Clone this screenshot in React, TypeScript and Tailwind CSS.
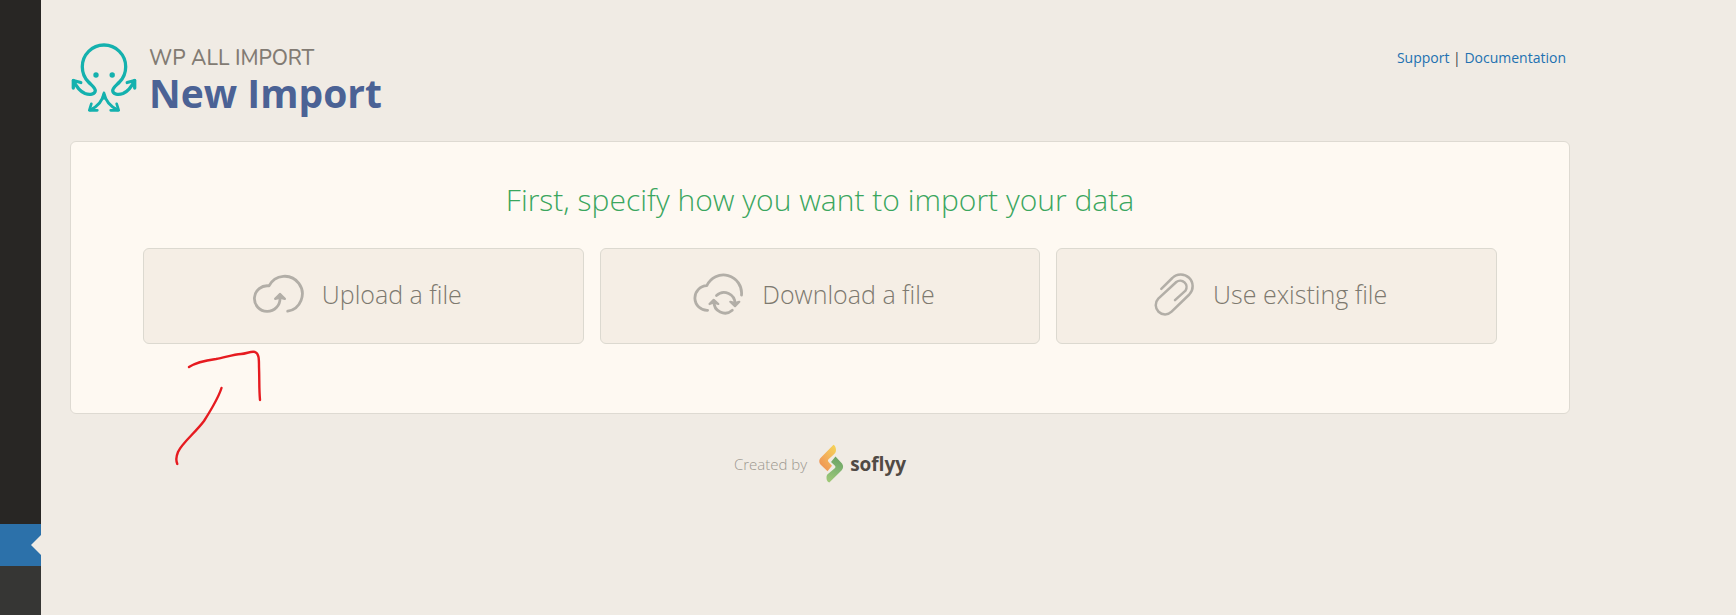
import React from 'react';

const OctopusLogo: React.FC = () => (
  <svg className="mt-0.5 w-[68px] h-[72px] shrink-0" viewBox="0 0 68 72" fill="none" stroke="#14b1ae" strokeWidth="3.3" strokeLinecap="round" strokeLinejoin="round">
    <path d="M3.500 38.700C6.500 45 10.500 49.500 15 51.500C19.500 53 25.300 52.500 25.300 48.500C25.300 46 22 43.700 18.500 40C14.500 36 12.300 31 12.300 24.700A21.700 21.700 0 0 1 55.700 24.700C55.700 31 53.500 36 49.500 40C46 43.700 42.700 46 42.700 48.500C42.700 52.500 48.500 53 53 51.500C57.500 49.500 61.500 45 64.500 38.700" />
    <path d="M3.300 46V38.500L10.800 40.500M64.700 46V38.500L57.200 40.500" />
    <path d="M34 51.500C32.500 58.500 28.500 64 20.500 67.800M34 51.500C35.500 58.500 39.500 64 47.500 67.800" strokeWidth="3" />
    <path d="M21.300 61.800L19.300 68.300H27.300M46.700 61.800L48.700 68.300H40.700" strokeWidth="2.700" />
    <path d="M34 50L36 57H32Z" fill="#14b1ae" strokeWidth="1" />
    <circle cx="26" cy="33" r="2.7" fill="#14b1ae" stroke="none" />
    <circle cx="42.200" cy="33" r="2.7" fill="#14b1ae" stroke="none" />
  </svg>
);

const UploadIcon: React.FC = () => (
  <svg className="w-[51px] h-[42px]" viewBox="0 0 51 42" fill="none" stroke="#b2aea7" strokeWidth="2.8" strokeLinecap="round" strokeLinejoin="round">
    <path d="M34.700 37.200A17.600 17.600 0 1 0 16 11.900A12.800 12.800 0 1 0 27 24V21" />
    <path d="M22.200 24.800L27 20L31.800 24.800L27 23.500Z" fill="#b2aea7" strokeWidth="2.400" />
  </svg>
);

const DownloadIcon: React.FC = () => (
  <svg className="w-[51px] h-[44px]" viewBox="0 0 51 44" fill="none" stroke="#b2aea7" strokeWidth="2.8" strokeLinecap="round" strokeLinejoin="round">
    <path d="M14.600 37.300A12.300 12.300 0 0 1 13.800 12.700A18.200 18.200 0 0 1 48.500 22" />
    <path d="M23.500 22.500A11 11 0 0 1 42 31M39.300 37.300A11 11 0 0 1 21 28.500" />
    <path d="M37.300 28.800L42 30L46.300 28.800L42 33.200ZM16.500 31L20.700 26.800L25.300 31L20.700 29.500Z" fill="#b2aea7" strokeWidth="2.200" />
  </svg>
);

const ClipIcon: React.FC = () => (
  <svg className="w-[41px] h-[44px]" viewBox="0 0 41 44" fill="none" stroke="#b2aea7" strokeWidth="2.5" strokeLinecap="round" strokeLinejoin="round">
    <path d="M7.300 15.800L18.300 5A11.800 11.800 0 0 1 35.300 21.500L17.600 38.700A9.300 9.300 0 0 1 4.300 25.700L22.300 9A6.400 6.400 0 0 1 31.500 17.600L21 27.200" />
  </svg>
);

const SoflyyMark: React.FC = () => (
  <svg className="w-[25px] h-[40px]" viewBox="0 0 25 40">
    <defs>
      <linearGradient id="sun" x1="1" y1="0" x2="0.200" y2="1">
        <stop offset="0" stopColor="#f5d657" />
        <stop offset="0.500" stopColor="#f4b45a" />
        <stop offset="1" stopColor="#ee9055" />
      </linearGradient>
      <linearGradient id="leaf" x1="0.600" y1="0" x2="0.400" y2="1">
        <stop offset="0" stopColor="#6ba263" />
        <stop offset="0.550" stopColor="#85b873" />
        <stop offset="1" stopColor="#9fc877" />
      </linearGradient>
    </defs>
    <path fill="url(#sun)" d="M14.500 0.700C16 1.500 17 3.500 17 6C17 8 16 9.500 14.500 10.800L9.500 15.300C8.500 16.500 9 17.500 10 18.500L13 21.700L8.500 27.300L1.500 20.500C-0.300 18.500 0 15.500 1.500 14Z" />
    <path fill="url(#leaf)" d="M16.500 12.500L23 19.500C24.600 21.500 24.500 24.500 22.500 26.500L10.300 38.500C8 37.500 7.500 36 7.500 33.500C7.500 31.800 8 30.600 9.500 29.500L15.500 24.500C16.800 23.300 16.700 22.500 15.700 21.500L12 18Z" />
  </svg>
);

const ScribbleArrow: React.FC = () => (
  <svg className="pointer-events-none absolute top-[349px] left-[173px] w-[92px] h-[118px]" viewBox="0 0 92 118" fill="none" stroke="#e61b20" strokeWidth="2.4" strokeLinecap="round" strokeLinejoin="round">
    <path d="M16 18C22 14 32 11.500 43 10C52 8.500 60 5.500 68 5C74 4.500 78 2 82 3C86 4.500 86 10 86 18C86.500 30 86 40 87 51" />
    <path d="M48.500 39C45 50 38 61 31 72C22 84 9 94 5 103C3 108 3 112 4.300 115" />
  </svg>
);

const sources = [
  { label: 'Upload a file', Icon: UploadIcon },
  { label: 'Download a file', Icon: DownloadIcon },
  { label: 'Use existing file', Icon: ClipIcon },
];

const Sidebar: React.FC = () => (
  <aside className="flex w-[41px] shrink-0 flex-col bg-[#363634]">
    <div className="h-[524px] bg-[#282624]" />
    <div className="flex h-[42px] items-center justify-end bg-[#2c71aa]">
      <svg className="w-[10px] h-5" viewBox="0 0 10 20" fill="#f0ebe4">
        <path d="M10 0V20L0 10Z" />
      </svg>
    </div>
  </aside>
);

const App: React.FC = () => {
  return (
    <div className="relative flex min-h-screen bg-[#f0ebe4] font-['Open_Sans',sans-serif]">
      <Sidebar />

      <main className="flex-1 pl-[29px] pr-[166px] pt-10">
        <header className="flex h-[101px] items-start justify-between">
          <div className="flex gap-[11px]">
            <OctopusLogo />
            <div className="pt-1">
              <p className="font-['Nunito','Lato',sans-serif] text-[21px] leading-7 font-medium text-[#827b73]">WP ALL IMPORT</p>
              <h1 className="text-[39px] leading-[42px] font-bold text-[#4b6295]">New Import</h1>
            </div>
          </div>
          <nav className="pt-1.5 pr-1 text-[14px] leading-6 text-[#3c434a]">
            <a href="#support" className="text-[#2271b1]">Support</a>
            {' | '}
            <a href="#documentation" className="text-[#2271b1]">Documentation</a>
          </nav>
        </header>

        <section className="h-[273px] rounded-md border border-[#dedad2] bg-[#fef9f2] px-[72px] pt-[38px]">
          <h2 className="text-center text-[30px] leading-10 font-light text-[#3aa65e]">First, specify how you want to import your data</h2>
          <div className="mt-7 grid grid-cols-3 gap-4">
            {sources.map(({ label, Icon }) => (
              <button
                key={label}
                type="button"
                className="flex h-24 items-center justify-center gap-[18px] rounded-md border border-[#dcd9d0] bg-[#f5eee5] pr-3 pb-0.5 text-[25px] font-light text-[#7d796f]"
              >
                <Icon />
                {label}
              </button>
            ))}
          </div>
        </section>

        <footer className="flex h-[100px] items-center justify-center text-[15px] font-light text-[#9c9890]">
          <span className="mr-3">Created by</span>
          <SoflyyMark />
          <span className="ml-1.5 text-[19px] font-bold text-[#514a45]">soflyy</span>
        </footer>
      </main>

      <ScribbleArrow />
    </div>
  );
};

export default App;
